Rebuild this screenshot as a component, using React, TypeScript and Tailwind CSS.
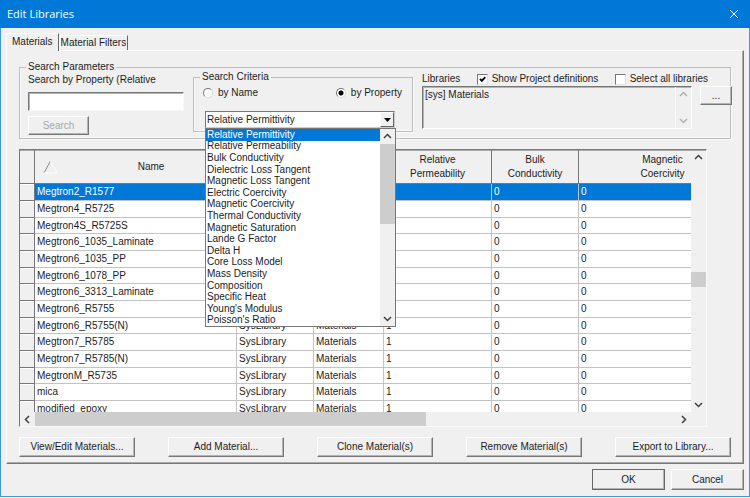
import React, { useState } from "react"

const properties = [
  "Relative Permittivity",
  "Relative Permeability",
  "Bulk Conductivity",
  "Dielectric Loss Tangent",
  "Magnetic Loss Tangent",
  "Electric Coercivity",
  "Magnetic Coercivity",
  "Thermal Conductivity",
  "Magnetic Saturation",
  "Lande G Factor",
  "Delta H",
  "Core Loss Model",
  "Mass Density",
  "Composition",
  "Specific Heat",
  "Young's Modulus",
  "Poisson's Ratio",
]

const materials = [
  "Megtron2_R1577",
  "Megtron4_R5725",
  "Megtron4S_R5725S",
  "Megtron6_1035_Laminate",
  "Megtron6_1035_PP",
  "Megtron6_1078_PP",
  "Megtron6_3313_Laminate",
  "Megtron6_R5755",
  "Megtron6_R5755(N)",
  "Megtron7_R5785",
  "Megtron7_R5785(N)",
  "MegtronM_R5735",
  "mica",
  "modified_epoxy",
]

const actions = [
  "View/Edit Materials...",
  "Add Material...",
  "Clone Material(s)",
  "Remove Material(s)",
  "Export to Library...",
]

const arrows = {
  up: "M1 6 L4.5 2.5 L8 6",
  down: "M1 3 L4.5 6.5 L8 3",
  left: "M6 1 L2.5 4.5 L6 8",
  right: "M3 1 L6.5 4.5 L3 8",
}

function ArrowButton({
  direction,
  disabled,
}: {
  direction: "up" | "down" | "left" | "right"
  disabled?: boolean
}) {
  return (
    <button
      type="button"
      aria-label={`Scroll ${direction}`}
      disabled={disabled}
      className="flex h-[15px] w-[15px] shrink-0 items-center justify-center text-[#404040] disabled:text-[#b0b0b0]"
    >
      <svg width="9" height="9" viewBox="0 0 9 9" fill="none">
        <path d={arrows[direction]} stroke="currentColor" strokeWidth="1.5" />
      </svg>
    </button>
  )
}

function Button({
  children,
  className = "",
  disabled,
}: {
  children: string
  className?: string
  disabled?: boolean
}) {
  return (
    <button
      type="button"
      disabled={disabled}
      className={`flex items-center justify-center whitespace-nowrap border border-t-white border-l-white border-r-[#777] border-b-[#777] shadow-[inset_-1px_-1px_0_#b4b4b4] disabled:text-[#a8a8a8] ${className}`}
    >
      {children}
    </button>
  )
}

function Radio({
  label,
  checked,
  onChange,
}: {
  label: string
  checked: boolean
  onChange: () => void
}) {
  return (
    <label className="flex items-center gap-[5px]">
      <input
        type="radio"
        name="criteria"
        checked={checked}
        onChange={onChange}
        className="h-[10px] w-[10px] appearance-none rounded-full border border-t-[#777] border-l-[#777] border-r-[#ddd] border-b-[#ddd] bg-white checked:bg-[radial-gradient(circle,#000_2px,#fff_3px)]"
      />
      {label}
    </label>
  )
}

function CheckBox({
  label,
  defaultChecked,
}: {
  label: string
  defaultChecked?: boolean
}) {
  return (
    <label className="flex items-center gap-1 whitespace-nowrap">
      <span className="relative flex">
        <input
          type="checkbox"
          defaultChecked={defaultChecked}
          className="peer h-[11px] w-[11px] appearance-none border border-t-[#777] border-l-[#777] border-r-[#e3e3e3] border-b-[#e3e3e3] bg-white"
        />
        <svg
          className="pointer-events-none absolute inset-0 hidden peer-checked:block"
          width="11"
          height="11"
          viewBox="0 0 11 11"
          fill="none"
        >
          <path d="M3 4.8 L4.8 6.8 L8.2 3.2" stroke="#000" strokeWidth="1.9" />
        </svg>
      </span>
      {label}
    </label>
  )
}

function PropertySelect() {
  const [selected, setSelected] = useState(properties[0])
  return (
    <div className="relative mt-3 ml-[11px] w-[190px]">
      <select
        aria-label="Property"
        value={selected}
        onChange={(e) => setSelected(e.target.value)}
        className="block h-[17px] w-full appearance-none border border-t-[#777] border-l-[#777] border-r-[#ccc] border-b-[#ccc] bg-white pl-px"
      >
        {properties.map((name) => (
          <option key={name}>{name}</option>
        ))}
      </select>
      <span className="pointer-events-none absolute top-px right-px flex h-[15px] w-[14px] items-center justify-center border border-t-white border-l-white border-r-[#666] border-b-[#666] bg-[#f0f0f0]">
        <svg width="7" height="4" viewBox="0 0 7 4">
          <path d="M0 0 H7 L3.5 4 Z" fill="#000" />
        </svg>
      </span>
      <div className="absolute top-full left-0 z-10 flex h-[199px] w-[191px] border border-[#777] bg-white">
        <ul role="listbox" aria-label="Properties" className="flex flex-1 flex-col">
          {properties.map((name) => (
            <li
              key={name}
              role="option"
              aria-selected={name === selected}
              onClick={() => setSelected(name)}
              className="flex flex-1 items-center pl-px leading-none aria-selected:bg-[#0078d7] aria-selected:text-white"
            >
              {name}
            </li>
          ))}
        </ul>
        <div className="flex w-[15px] flex-col bg-[#f0f0f0]">
          <ArrowButton direction="up" />
          <div className="h-20 bg-[#cdcdcd]" />
          <div className="flex-1" />
          <ArrowButton direction="down" />
        </div>
      </div>
    </div>
  )
}

function SearchParameters() {
  const [byName, setByName] = useState(false)
  return (
    <fieldset className="border border-[#bdbdbd] pr-[38px] pb-[3px] pl-2 shadow-[inset_1px_-1px_0_#fafafa,1px_1px_0_#fafafa]">
      <legend className="-ml-0.5 px-0.5">Search Parameters</legend>
      <div className="-mt-0.5 flex">
        <div className="w-[156px] shrink-0 pt-[3px]">
          <label htmlFor="search" className="block whitespace-nowrap">
            Search by Property (Relative
          </label>
          <input
            id="search"
            type="text"
            className="mt-1.5 block h-[19px] w-full border border-t-[#777] border-l-[#777] border-r-[#f8f8f8] border-b-[#f8f8f8] bg-white px-1 shadow-[inset_1px_1px_0_#b4b4b4]"
          />
          <Button disabled className="mt-[5px] h-[19px] w-[61px]">
            Search
          </Button>
        </div>
        <fieldset className="ml-[9px] h-[61px] w-[220px] shrink-0 border border-[#bdbdbd] shadow-[inset_1px_-1px_0_#fafafa,1px_1px_0_#fafafa]">
          <legend className="ml-1.5 px-0.5">Search Criteria</legend>
          <div className="mt-1 flex justify-between pr-2.5 pl-[9px]">
            <Radio label="by Name" checked={byName} onChange={() => setByName(true)} />
            <Radio label="by Property" checked={!byName} onChange={() => setByName(false)} />
          </div>
          <PropertySelect />
        </fieldset>
        <div className="ml-[9px] flex-1 pt-0.5">
          <div className="-mr-4 flex justify-between">
            <span id="libraries">Libraries</span>
            <CheckBox label="Show Project definitions" defaultChecked />
            <CheckBox label="Select all libraries" />
          </div>
          <div className="mt-px flex">
            <div className="flex h-[43px] flex-1 border border-t-[#777] border-l-[#777] border-r-white border-b-white shadow-[inset_1px_1px_0_#b4b4b4]">
              <ul aria-labelledby="libraries" className="flex-1 pt-0.5 pl-0.5">
                <li>[sys] Materials</li>
              </ul>
              <div className="flex flex-col justify-between border-l border-[#fafafa]">
                <ArrowButton direction="up" disabled />
                <ArrowButton direction="down" disabled />
              </div>
            </div>
            <Button className="-mr-10 ml-2 h-[19px] w-8 bg-[#f0f0f0]">...</Button>
          </div>
        </div>
      </div>
    </fieldset>
  )
}

const headCell =
  "border-r border-b border-r-[#777] border-b-[#777] text-center font-normal leading-[14px]"
const cell = "border-r border-b border-[#c3c3c3] p-0 pl-0.5 whitespace-nowrap"

function MaterialsTable() {
  return (
    <div className="mt-2.5 mr-6 border border-t-[#777] border-l-[#777] border-r-[#fafafa] border-b-[#fafafa] shadow-[inset_0_1px_0_#aaa]">
      <div className="flex">
        <div className="h-[262px] flex-1 overflow-hidden">
          <table className="w-[calc(100%+56px)] table-fixed border-separate border-spacing-0">
            <thead>
              <tr className="h-[34px]">
                <th className={`${headCell} w-[15px]`} aria-label="Row" />
                <th className={`${headCell} w-[202px]`}>
                  <div className="flex items-center">
                    <svg className="ml-2" width="15" height="14" viewBox="0 0 15 14" fill="none">
                      <path d="M1 13 L7.5 1" stroke="#8a8a8a" />
                      <path d="M7.5 1 L14 13 H1" stroke="#fff" />
                    </svg>
                    <span className="flex-1 pl-2">Name</span>
                  </div>
                </th>
                <th className={`${headCell} w-[77px]`}>Location</th>
                <th className={`${headCell} w-[70px]`}>Origin</th>
                <th className={`${headCell} w-[108px]`}>
                  Relative
                  <br />
                  Permeability
                </th>
                <th className={`${headCell} w-[87px]`}>
                  Bulk
                  <br />
                  Conductivity
                </th>
                <th className={headCell}>
                  Magnetic
                  <br />
                  Coercivity
                </th>
              </tr>
            </thead>
            <tbody>
              {materials.map((name, i) => (
                <tr
                  key={name}
                  className={`h-[17px] [&:nth-child(3n)]:h-4 ${
                    i === 0 ? "bg-[#0078d7] text-white" : "bg-white"
                  }`}
                >
                  <td className="border-r border-b border-[#777] bg-[#f0f0f0] p-0 shadow-[inset_0_1px_0_#fff]" />
                  <td className={cell}>{name}</td>
                  <td className={cell}>SysLibrary</td>
                  <td className={cell}>Materials</td>
                  <td className={cell}>1</td>
                  <td className={cell}>0</td>
                  <td className={cell}>0</td>
                </tr>
              ))}
            </tbody>
          </table>
        </div>
        <div className="flex w-[15px] flex-col">
          <ArrowButton direction="up" />
          <div className="h-[107px]" />
          <div className="h-[15px] bg-[#cdcdcd]" />
          <div className="flex-1" />
          <ArrowButton direction="down" />
        </div>
      </div>
      <div className="mr-[15px] flex h-[14px] items-center">
        <ArrowButton direction="left" />
        <div className="flex flex-1 self-stretch">
          <div className="w-[61%] bg-[#cdcdcd]" />
        </div>
        <ArrowButton direction="right" />
      </div>
    </div>
  )
}

export default function App() {
  return (
    <div className="border border-t-0 border-[#3f97dd] bg-[#f0f0f0] font-['Liberation_Sans',Arial,sans-serif] text-[10px] leading-3 text-[#1c1c1c]">
      <header className="-mx-px flex h-7 items-center justify-between bg-[#0078d7] pr-[11px] pl-[7px] text-white">
        <h1 className="font-['Open_Sans',sans-serif] text-[11px]">Edit Libraries</h1>
        <button type="button" aria-label="Close">
          <svg width="10" height="10" viewBox="0 0 10 10" fill="none">
            <path d="M1 1 L9 9 M9 1 L1 9" stroke="#fff" />
          </svg>
        </button>
      </header>
      <main className="px-[5px] pt-[5px] pb-1.5">
        <div role="tablist" className="flex items-end">
          <button
            type="button"
            role="tab"
            aria-selected="true"
            className="relative z-10 -mb-px h-[18px] border border-b-0 border-t-white border-l-white border-r-[#666] bg-[#f0f0f0] px-[5px] pb-0.5"
          >
            Materials
          </button>
          <button
            type="button"
            role="tab"
            aria-selected="false"
            className="h-[15px] border border-b-0 border-t-white border-l-white border-r-[#666] px-px"
          >
            Material Filters
          </button>
        </div>
        <section className="border border-t-white border-l-white border-r-[#777] border-b-[#777] px-3 pt-2.5 pb-1.5 shadow-[inset_-1px_-1px_0_#aaa]">
          <SearchParameters />
          <MaterialsTable />
          <div className="mt-2.5 flex justify-between">
            {actions.map((action) => (
              <Button key={action} className="h-5 w-[116px]">
                {action}
              </Button>
            ))}
          </div>
        </section>
        <footer className="mt-[5px] flex justify-end gap-1.5">
          <Button className="h-[21px] w-[73px] outline outline-1 -outline-offset-1 outline-[#666]">OK</Button>
          <Button className="h-[21px] w-[73px]">Cancel</Button>
        </footer>
      </main>
    </div>
  )
}
